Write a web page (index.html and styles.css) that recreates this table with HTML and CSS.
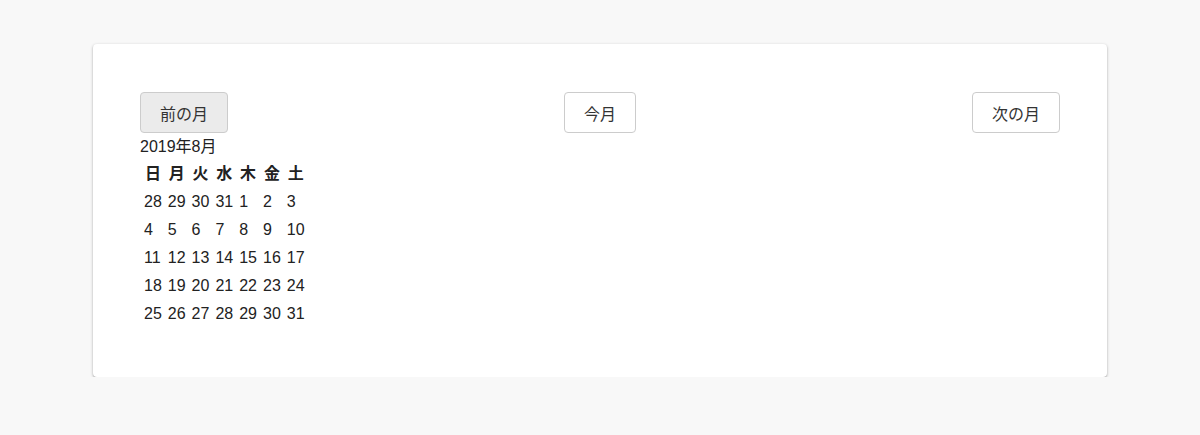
FILE: index.html
```html
<!DOCTYPE html>
<html lang="ja">
<head>
    <meta charset="UTF-8">
    <meta name="viewport" content="width=device-width, initial-scale=1.0">
    <title>カレンダー</title>
    <link rel="stylesheet" href="styles.css">
</head>
<body>
    <div class="card">
        <div class="nav">
            <button class="btn btn-prev">前の月</button>
            <button class="btn">今月</button>
            <button class="btn">次の月</button>
        </div>
        <div class="month">2019年8月</div>
        <table class="calendar">
            <thead>
                <tr><th>日</th><th>月</th><th>火</th><th>水</th><th>木</th><th>金</th><th>土</th></tr>
            </thead>
            <tbody>
                <tr><td>28</td><td>29</td><td>30</td><td>31</td><td>1</td><td>2</td><td>3</td></tr>
                <tr><td>4</td><td>5</td><td>6</td><td>7</td><td>8</td><td>9</td><td>10</td></tr>
                <tr><td>11</td><td>12</td><td>13</td><td>14</td><td>15</td><td>16</td><td>17</td></tr>
                <tr><td>18</td><td>19</td><td>20</td><td>21</td><td>22</td><td>23</td><td>24</td></tr>
                <tr><td>25</td><td>26</td><td>27</td><td>28</td><td>29</td><td>30</td><td>31</td></tr>
            </tbody>
        </table>
    </div>
</body>
</html>
```

FILE: styles.css
```css
body {
    margin: 0;
    background-color: #f8f8f8;
    font-family: "Liberation Sans", "Noto Sans CJK JP", sans-serif;
    font-size: 16px;
    color: #222;
}

.card {
    width: 1014px;
    margin: 44px auto 0;
    padding: 48px 47px 48px;
    box-sizing: border-box;
    background-color: #fff;
    border-radius: 4px;
    box-shadow: 0 1px 3px rgba(0, 0, 0, 0.3), 0 1px 1px rgba(0, 0, 0, 0.1);
}

/* botones de navegación */
.nav {
    display: flex;
    justify-content: space-between;
    align-items: center;
}

.btn {
    height: 41px;
    padding: 0 19px;
    font-family: "Liberation Sans", "Noto Sans CJK JP", sans-serif;
    font-size: 16px;
    color: #333;
    background-color: #fff;
    border: 1px solid #ccc;
    border-radius: 4px;
}

.btn-prev {
    background-color: #ebebeb;
}

.month {
    padding-top: 2px;
    line-height: 24px;
}

.calendar {
    border-spacing: 2px;
}

.calendar th,
.calendar td {
    padding: 1px 2px;
    line-height: 24px;
}

.calendar th {
    font-weight: bold;
}
```
